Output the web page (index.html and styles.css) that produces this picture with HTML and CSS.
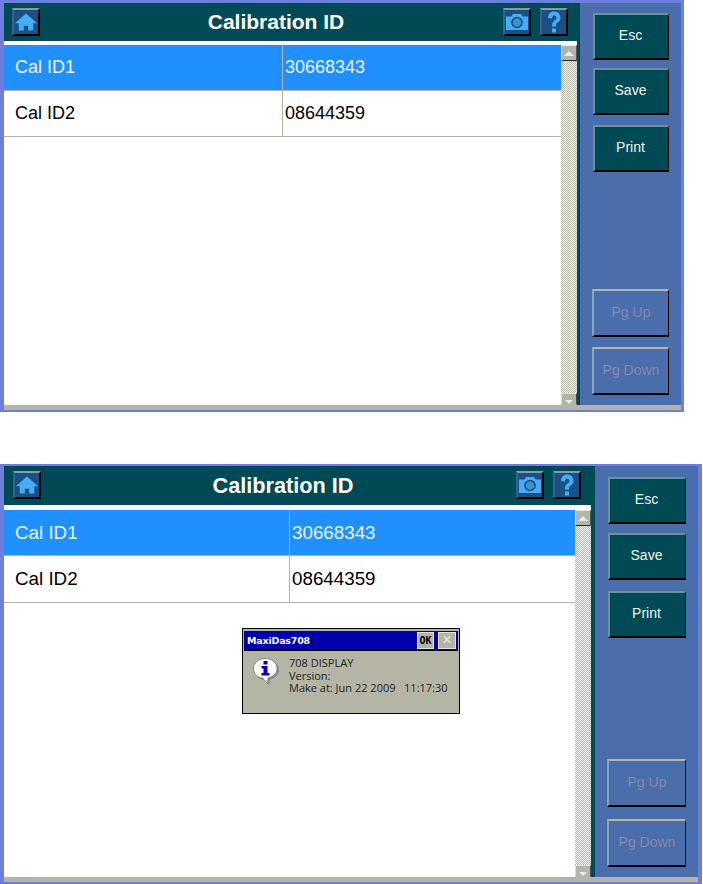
FILE: index.html
```html
<!DOCTYPE html>
<html lang="en">
<head>
<meta charset="utf-8">
<title>Calibration ID</title>
<link rel="stylesheet" href="styles.css">
</head>
<body>
<svg class="defs" width="0" height="0" aria-hidden="true">
  <defs>
    <pattern id="checker" width="2" height="2" patternUnits="userSpaceOnUse">
      <rect width="2" height="2" fill="#fff"/>
      <rect width="1" height="1" fill="#b5b5a6"/>
      <rect x="1" y="1" width="1" height="1" fill="#b5b5a6"/>
    </pattern>
  </defs>
  <symbol id="i-home" viewBox="0 0 28 28">
    <path d="M14 4 L27 15.500 H22.500 V24 H16.500 V18.500 H11.500 V24 H5.500 V15.500 H1 Z" fill="#45adf8"/>
  </symbol>
  <symbol id="i-camera" viewBox="2 2 24 24">
    <path d="M3 8.500 H8.500 L10 6 H18 L19.500 8.500 H25 V22 H3 Z" fill="#45adf8"/>
    <circle cx="14" cy="14.500" r="5" fill="#3b93cf" stroke="#17476e" stroke-width="1.500"/>
  </symbol>
  <symbol id="i-help" viewBox="2 2 24 24">
    <path d="M8 10 C8 6 10.500 3.500 14 3.500 C18 3.500 20.500 6.300 20.500 10 C20.500 13 18.500 14 16.800 15.300 C16 16 16 16.800 16 18.500 H12 C12 15.500 12.500 14.200 14.300 12.800 C15.800 11.700 16.500 11.200 16.500 10 C16.500 8.800 15.500 7.500 14.100 7.500 C12.700 7.500 12 9 12 10.500 Z" fill="#45adf8"/>
    <rect x="12" y="20.500" width="4" height="4" fill="#45adf8"/>
  </symbol>
</svg>

<section class="window window-a">
  <div class="upper">
    <div class="main">
      <header class="titlebar">
        <button class="icon-btn"><svg class="icon"><use href="#i-home"/></svg></button>
        <h1 class="title">Calibration ID</h1>
        <div class="title-tools">
          <button class="icon-btn"><svg class="icon"><use href="#i-camera"/></svg></button>
          <button class="icon-btn"><svg class="icon"><use href="#i-help"/></svg></button>
        </div>
      </header>
      <div class="content">
        <div class="table">
          <div class="row selected"><span class="cell-name">Cal ID1</span><span class="cell-value">30668343</span></div>
          <div class="row"><span class="cell-name">Cal ID2</span><span class="cell-value">08644359</span></div>
        </div>
        <div class="scrollbar">
          <div class="arrow"><span class="tri-up"></span></div>
          <svg class="track"><rect width="100%" height="100%" fill="url(#checker)"/></svg>
          <div class="arrow arrow-down"><span class="tri-down"></span></div>
        </div>
      </div>
    </div>
    <aside class="side">
      <div class="side-group">
        <button class="btn">Esc</button>
        <button class="btn">Save</button>
        <button class="btn">Print</button>
      </div>
      <div class="side-group side-bottom">
        <button class="btn btn-off">Pg Up</button>
        <button class="btn btn-off">Pg Down</button>
      </div>
    </aside>
  </div>
  <div class="hscroll"></div>
</section>

<section class="window window-b">
  <div class="upper">
    <div class="main">
      <header class="titlebar">
        <button class="icon-btn"><svg class="icon"><use href="#i-home"/></svg></button>
        <h1 class="title">Calibration ID</h1>
        <div class="title-tools">
          <button class="icon-btn"><svg class="icon"><use href="#i-camera"/></svg></button>
          <button class="icon-btn"><svg class="icon"><use href="#i-help"/></svg></button>
        </div>
      </header>
      <div class="content">
        <div class="table">
          <div class="row selected"><span class="cell-name">Cal ID1</span><span class="cell-value">30668343</span></div>
          <div class="row"><span class="cell-name">Cal ID2</span><span class="cell-value">08644359</span></div>
        </div>
        <div class="scrollbar">
          <div class="arrow"><span class="tri-up"></span></div>
          <svg class="track"><rect width="100%" height="100%" fill="url(#checker)"/></svg>
          <div class="arrow arrow-down"><span class="tri-down"></span></div>
        </div>
      </div>
    </div>
    <aside class="side">
      <div class="side-group">
        <button class="btn">Esc</button>
        <button class="btn">Save</button>
        <button class="btn">Print</button>
      </div>
      <div class="side-group side-bottom">
        <button class="btn btn-off">Pg Up</button>
        <button class="btn btn-off">Pg Down</button>
      </div>
    </aside>
  </div>
  <div class="hscroll"></div>
  <div class="dialog">
    <div class="dialog-bar">
      <span class="dialog-name">MaxiDas708</span>
      <span class="dialog-ok">OK</span>
      <span class="dialog-x">×</span>
    </div>
    <div class="dialog-body">
      <svg class="dialog-icon" viewBox="0 0 28 30">
        <path d="M15 3 C22 3 27 7.500 27 13 C27 18 23 21.500 18 22.500 L17 28 L12 23 C6 22.500 3 18 3 13 C3 7.500 8 3 15 3 Z" fill="#8a8a98"/>
        <path d="M13.500 1.500 C20 1.500 25 6 25 11.500 C25 16.500 21 20 16 21 L15.500 26.500 L10.500 21 C5 20.500 1.500 16.500 1.500 11.500 C1.500 6 7 1.500 13.500 1.500 Z" fill="#fff" stroke="#55555f" stroke-width=".6"/>
        <rect x="11.500" y="4" width="4" height="3.500" fill="#0000c0"/>
        <path d="M9.500 9 H15.500 V16 H17.500 V18.500 H9.500 V16 H11.500 V11.500 H9.500 Z" fill="#0000c0"/>
      </svg>
      <div class="dialog-text">
        <div>708 DISPLAY</div>
        <div>Version:</div>
        <div>Make at: Jun 22 2009&nbsp;&nbsp; 11:17:30</div>
      </div>
    </div>
  </div>
</section>
</body>
</html>
```

FILE: styles.css
```css
* { box-sizing: border-box; }
html, body { margin: 0; padding: 0; background: #fff; }
body { height: 884px; overflow: hidden; font-family: "Liberation Sans", Arial, sans-serif; }
.defs { position: absolute; }

.window {
  position: relative;
  display: flex;
  flex-direction: column;
  background: #4a6dab;
  border-style: solid;
  border-color: #6f7ddc;
}
.window-a {
  width: 684px; height: 412px; margin-bottom: 52px;
  border-width: 3px 3px 2px 4px;
  --head: 38px; --name: 279px; --side: 104px; --sliver: 3px; --row1: 46px; --row2: 46px;
  --title: 21px; --cell: 18px; --btn-w: 76px;
  --tools-right: 9px; --home-left: 8px; --title-shift: 9px; --body-top: 4px;
  --side-pad: 10px; --side-left: 13px;
  --gap-1: 8px; --gap-2: 10px; --lower-gap: 10px;
}
.window-b {
  width: 702px; height: 420px;
  border-width: 2px 4px 2px 4px;
  --head: 39px; --name: 286px; --side: 107px; --sliver: 4px; --row1: 46px; --row2: 47px;
  --title: 21.700px; --cell: 18.800px; --btn-w: 78px;
  --tools-right: 10px; --home-left: 9px; --title-shift: 9px; --body-top: 5px;
  --side-pad: 11px; --side-left: 13px;
  --gap-1: 9px; --gap-2: 11px; --lower-gap: 12px;
}

.upper { flex: 1; min-height: 0; display: flex; }
.main { flex: 1; min-width: 0; display: flex; flex-direction: column; }
.titlebar {
  height: var(--head);
  flex: none;
  display: flex;
  align-items: flex-start;
  padding: 5px var(--tools-right) 0 var(--home-left);
  background: #004a55;
}
.title {
  flex: 1;
  margin: 0;
  padding-left: var(--title-shift);
  color: #fff;
  font-size: var(--title);
  font-weight: 700;
  text-align: center;
  line-height: 28px;
}
.window-b .title { line-height: 30px; }
.title-tools { display: flex; gap: 9px; }
.icon-btn {
  width: 28px; height: 28px;
  padding: 0;
  background: #1c4f82;
  border-style: solid;
  border-width: 2px;
  border-color: #7e9ea4 #000 #000 #33619a;
  display: block;
}
.icon { width: 100%; height: 100%; display: block; }

.content { flex: 1; min-height: 0; display: flex; background: #fff; padding-top: var(--body-top); }
.table { flex: 1; min-width: 0; }
.row {
  height: var(--row1);
  display: flex;
  align-items: center;
  border-bottom: 1px solid #b5b5a6;
  font-size: var(--cell);
  color: #000;
}
.row + .row { height: var(--row2); }
.row.selected { background: #2090ff; color: #e8f3ff; }
.cell-name { width: var(--name); padding-left: 11px; align-self: stretch; display: flex; align-items: center; border-right: 1px solid #b5b5a6; }
.cell-value { padding-left: 2px; }

.scrollbar { width: 16px; flex: none; display: flex; flex-direction: column; }
.arrow {
  height: 16px; flex: none;
  background: #b5b5a6;
  border-style: solid; border-width: 1px;
  border-color: #e4e4ee #55555f #2a2a2a #e4e4ee;
  display: flex; align-items: center; justify-content: center;
}
.arrow-down { height: 12px; align-items: flex-end; border-color: #dcdcf0 #4a4a55 transparent #dcdcf0; }
.tri-up { width: 0; height: 0; border: 5px solid transparent; border-top: 0; border-bottom-color: #e9e9f2; }
.tri-down { width: 0; height: 0; border: 4px solid transparent; border-bottom: 0; border-top-color: #e9e9f2; }
.track { flex: 1; min-height: 0; width: 16px; display: block; }
.hscroll { height: 5px; flex: none; background: #b5b5a6; }

.side {
  width: var(--side);
  flex: none;
  display: flex;
  flex-direction: column;
  background: #4a6dab;
  border-left: var(--sliver) solid #004a55;
  padding: var(--side-pad) 0 10px var(--side-left);
}
.side-group { display: flex; flex-direction: column; }
.side-group .btn + .btn { margin-top: var(--gap-1); }
.side-group .btn:nth-child(3) { margin-top: var(--gap-2); }
.side-bottom { margin-top: auto; margin-left: -1px; }
.side-bottom .btn { width: calc(var(--btn-w) + 1px); height: 48px; padding: 0 0 2px; }
.side-bottom .btn + .btn { margin-top: var(--lower-gap); }

.btn {
  width: var(--btn-w);
  height: 47px;
  padding: 0 2px 4px 0;
  background: #004a55;
  color: #f2f5e6;
  font: 14px "Liberation Sans", Arial, sans-serif;
  border-style: solid;
  border-width: 2px 1px 2px 2px;
  border-color: #6f9199 #000 #000 #6f9199;
}
.btn-off {
  background: #4a6dab;
  color: #8588ad;
  border-color: #b5b5a6 #000 #000 #8fa3b8;
}

.dialog {
  position: absolute;
  left: 238px; top: 162px;
  width: 218px; height: 86px;
  background: #b5b5a6;
  border: 1px solid #000;
  padding: 2px 1px 0;
  display: flex;
  flex-direction: column;
}
.dialog-bar {
  height: 20px; flex: none;
  background: #0000a8;
  border-bottom: 1px solid #000;
  display: flex; align-items: center;
  padding: 0 2px 1px 2px;
  color: #fff;
}
.dialog-name { flex: 1; font: 700 9.500px "DejaVu Sans", sans-serif; letter-spacing: -.2px; padding-left: 1px; }
.dialog-ok {
  width: 17px; height: 17px;
  background: #b5b5a6; color: #000;
  font: 700 10px "DejaVu Sans Mono", monospace;
  display: flex; align-items: center; justify-content: center;
  margin-right: 4px;
  border: 1px solid #e4e4da;
}
.dialog-x {
  width: 18px; height: 17px;
  background: #b5b5a6; color: #e8e8e0;
  font: 16px "Liberation Sans", sans-serif;
  display: flex; align-items: center; justify-content: center;
  border: 1px solid #e4e4da;
}
.dialog-body { flex: 1; display: flex; padding: 6px 8px 0 8px; }
.dialog-icon { width: 28px; height: 30px; flex: none; margin-right: 9px; }
.dialog-text { font: 11px/12.500px "Open Sans", "Liberation Sans", sans-serif; color: #222; white-space: nowrap; }
```
